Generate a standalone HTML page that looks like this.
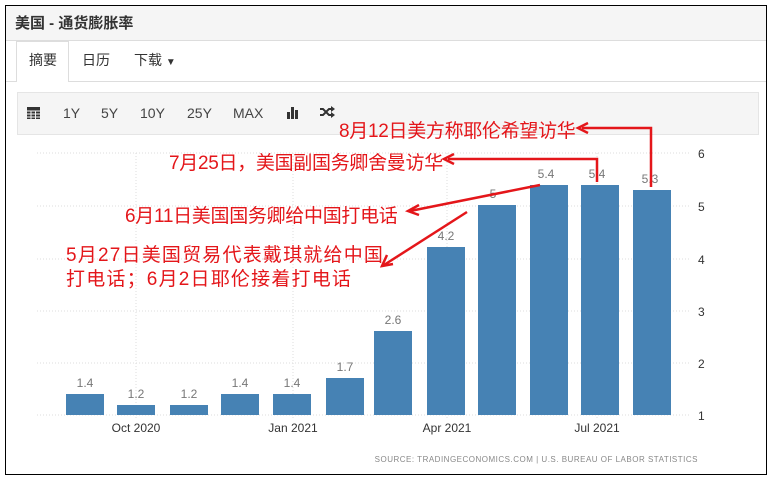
<!DOCTYPE html><html><head><meta charset="utf-8"><style>
body{margin:0;width:771px;height:479px;background:#fff;font-family:"Liberation Sans","Noto Sans CJK SC",sans-serif;position:relative;overflow:hidden}
.frame{position:absolute;left:5px;top:5px;width:760px;height:468px;border:1px solid #000}
.hdr{position:absolute;left:6px;top:6px;width:760px;height:34px;background:#f5f5f5;border-bottom:1px solid #ddd}
.hdr span{position:absolute;left:9px;top:6px;font-size:15px;font-weight:bold;color:#333}
.tab{position:absolute;top:50px;font-size:14px;color:#333}
.active{position:absolute;left:16px;top:41px;width:51px;height:40px;background:#fff;border:1px solid #ddd;border-bottom:none}
.tabline{position:absolute;left:6px;top:81px;width:760px;border-top:1px solid #ddd}
.tb{position:absolute;left:17px;top:92px;width:740px;height:41px;background:#f5f5f5;border:1px solid #e5e5e5}
.tb span{position:absolute;top:12px;font-size:14px;color:#444}
.r{position:absolute;color:#e4161a;font-size:19px;white-space:nowrap;letter-spacing:-0.3px}
</style></head><body>
<div class="hdr"><span>美国 - 通货膨胀率</span></div>
<div class="tabline"></div>
<div class="active"></div>
<div class="tab" style="left:29px">摘要</div>
<div class="tab" style="left:82px">日历</div>
<div class="tab" style="left:134px">下载 <span style="font-size:10px">▼</span></div>
<div class="tb">
<svg style="position:absolute;left:9px;top:13px" width="13" height="13"><rect x="0" y="1" width="13" height="12" fill="#333"/><g stroke="#f5f5f5" stroke-width="1"><line x1="0" y1="5" x2="13" y2="5"/><line x1="0" y1="8" x2="13" y2="8"/><line x1="0" y1="11" x2="13" y2="11"/><line x1="4" y1="5" x2="4" y2="13"/><line x1="8.5" y1="5" x2="8.5" y2="13"/></g></svg>
<span style="left:45px">1Y</span><span style="left:83px">5Y</span><span style="left:122px">10Y</span><span style="left:169px">25Y</span><span style="left:215px">MAX</span>
<svg style="position:absolute;left:268px;top:13px" width="13" height="13"><rect x="1" y="6" width="3" height="7" fill="#333"/><rect x="5" y="1" width="3" height="12" fill="#333"/><rect x="9" y="4" width="3" height="9" fill="#333"/></svg>
<svg style="position:absolute;left:302px;top:13px" width="15" height="12"><g stroke="#333" stroke-width="2" fill="none"><path d="M0,3 H3 L9,9 H12"/><path d="M0,9 H3 L9,3 H12"/></g><path d="M11,0 L15,3 L11,6Z M11,6 L15,9 L11,12Z" fill="#333"/></svg>
</div>
<svg style="position:absolute;left:0;top:0" width="771" height="479">
<g stroke="#ddd" stroke-dasharray="1,2" stroke-width="1">
<line x1="37" y1="153" x2="690" y2="153"/><line x1="37" y1="206" x2="690" y2="206"/><line x1="37" y1="259" x2="690" y2="259"/><line x1="37" y1="311" x2="690" y2="311"/><line x1="37" y1="363" x2="690" y2="363"/><line x1="37" y1="415" x2="690" y2="415"/>
<line x1="136" y1="153" x2="136" y2="420"/><line x1="293" y1="153" x2="293" y2="420"/><line x1="447" y1="153" x2="447" y2="420"/><line x1="597" y1="153" x2="597" y2="420"/>
</g>
<g fill="#4682b4">
<rect x="66" y="394" width="38" height="21"/><rect x="117" y="405" width="38" height="10"/><rect x="170" y="405" width="38" height="10"/><rect x="221" y="394" width="38" height="21"/><rect x="273" y="394" width="38" height="21"/><rect x="326" y="378" width="38" height="37"/><rect x="374" y="331" width="38" height="84"/><rect x="427" y="247" width="38" height="168"/><rect x="478" y="205" width="38" height="210"/><rect x="530" y="185" width="38" height="230"/><rect x="581" y="185" width="38" height="230"/><rect x="633" y="190" width="38" height="225"/>
</g>
<g fill="#777" font-size="12" text-anchor="middle" font-family="Liberation Sans">
<text x="85" y="387">1.4</text><text x="136" y="398">1.2</text><text x="189" y="398">1.2</text><text x="240" y="387">1.4</text><text x="292" y="387">1.4</text><text x="345" y="371">1.7</text><text x="393" y="324">2.6</text><text x="446" y="240">4.2</text><text x="493" y="198">5</text><text x="546" y="178">5.4</text><text x="597" y="178">5.4</text><text x="650" y="183">5.3</text>
</g>
<g fill="#333" font-size="12" font-family="Liberation Sans">
<text x="698" y="158">6</text><text x="698" y="211">5</text><text x="698" y="264">4</text><text x="698" y="316">3</text><text x="698" y="368">2</text><text x="698" y="420">1</text>
</g>
<g fill="#333" font-size="12" text-anchor="middle" font-family="Liberation Sans">
<text x="136" y="432">Oct 2020</text><text x="293" y="432">Jan 2021</text><text x="447" y="432">Apr 2021</text><text x="597" y="432">Jul 2021</text>
</g>
<text x="698" y="462" fill="#888" font-size="8" text-anchor="end" font-family="Liberation Sans" letter-spacing="0.5">SOURCE: TRADINGECONOMICS.COM | U.S. BUREAU OF LABOR STATISTICS</text>
<g stroke="#e4161a" stroke-width="2.5" fill="none">
<polyline points="651,187 651,128 582,128"/><path d="M588,123 L578,128 L588,133"/>
<polyline points="597,182 597,159 448,159"/><path d="M454,154 L444,159 L454,164"/>
<line x1="540" y1="185" x2="410" y2="211"/><path d="M419,205 L408,211 L419,215"/>
<line x1="467" y1="212" x2="384" y2="265"/><path d="M387,255 L382,266 L393,264"/>
</g>
</svg>
<div class="r" style="left:339px;top:116px">8月12日美方称耶伦希望访华</div>
<div class="r" style="left:169px;top:148px">7月25日，美国副国务卿舍曼访华</div>
<div class="r" style="left:125px;top:201px">6月11日美国国务卿给中国打电话</div>
<div class="r" style="left:66px;top:244px;line-height:24px;letter-spacing:1.2px">5月27日美国贸易代表戴琪就给中国<br>打电话；6月2日耶伦接着打电话</div>
<div class="frame"></div>
</body></html>
